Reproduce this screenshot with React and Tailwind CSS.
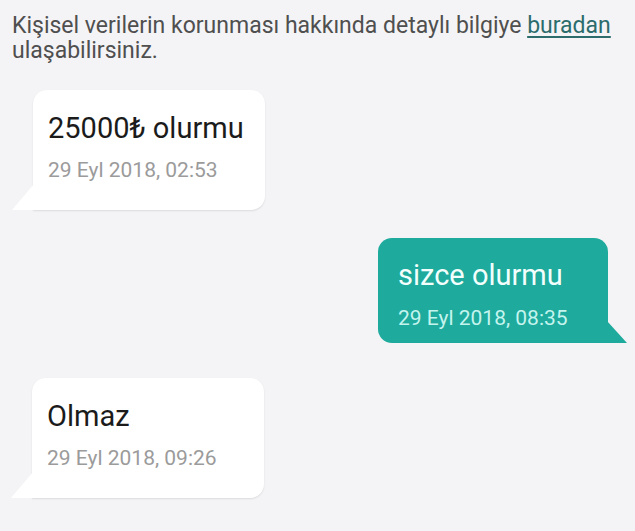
const messages = [
  { id: 1, side: 'in', text: '25000₺ olurmu', time: '29 Eyl 2018, 02:53' },
  { id: 2, side: 'out', text: 'sizce olurmu', time: '29 Eyl 2018, 08:35' },
  { id: 3, side: 'in', text: 'Olmaz', time: '29 Eyl 2018, 09:26' },
];

function Bubble({ side, text, time, className = '' }) {
  if (side === 'out') {
    return (
      <div className={`relative self-end mr-[27px] w-[230px] bg-[#1eaa9c] rounded-t-[14px] rounded-bl-[14px] pl-[20px] pt-[20px] pb-[12px] ${className}`}>
        <div className="text-[29px] leading-[34px] text-[#f2fffd]">{text}</div>
        <div className="mt-[13px] text-[21px] leading-[26px] text-[#c4f4ee]">{time}</div>
        <svg className="absolute -right-[19px] bottom-0" width="20" height="22" viewBox="0 0 20 22">
          <polygon points="0,0 20,22 0,22" fill="#1eaa9c" />
        </svg>
      </div>
    );
  }
  return (
    <div className={`relative w-[232px] bg-white rounded-t-[14px] rounded-br-[14px] shadow-[0_1px_2px_rgba(0,0,0,0.10)] pl-[15px] pt-[21px] pb-[27px] ${className}`}>
      <div className="text-[29px] leading-[34px] text-[#1b1b1b]">{text}</div>
      <div className="mt-[12px] text-[21px] leading-[26px] text-[#9b9b9b]">{time}</div>
      <svg className="absolute -left-[21px] bottom-0" width="22" height="26" viewBox="0 0 22 26">
        <polygon points="22,0 0,26 22,26" fill="#ffffff" />
      </svg>
    </div>
  );
}

export default function App() {
  return (
    <div className="min-h-[531px] w-full bg-[#f4f4f6] font-['Roboto',sans-serif] flex flex-col">
      <p className="px-[12px] pt-[13px] text-[23px] leading-[25px] text-[#4f4f4f]">
        Kişisel verilerin korunması hakkında detaylı bilgiye{' '}
        <span className="text-[#2c6c6c] underline underline-offset-[3px]">buradan</span>{' '}
        ulaşabilirsiniz.
      </p>
      <Bubble {...messages[0]} className="ml-[33px] mt-[27px]" />
      <Bubble {...messages[1]} className="mt-[28px]" />
      <Bubble {...messages[2]} className="ml-[32px] mt-[35px]" />
    </div>
  );
}
